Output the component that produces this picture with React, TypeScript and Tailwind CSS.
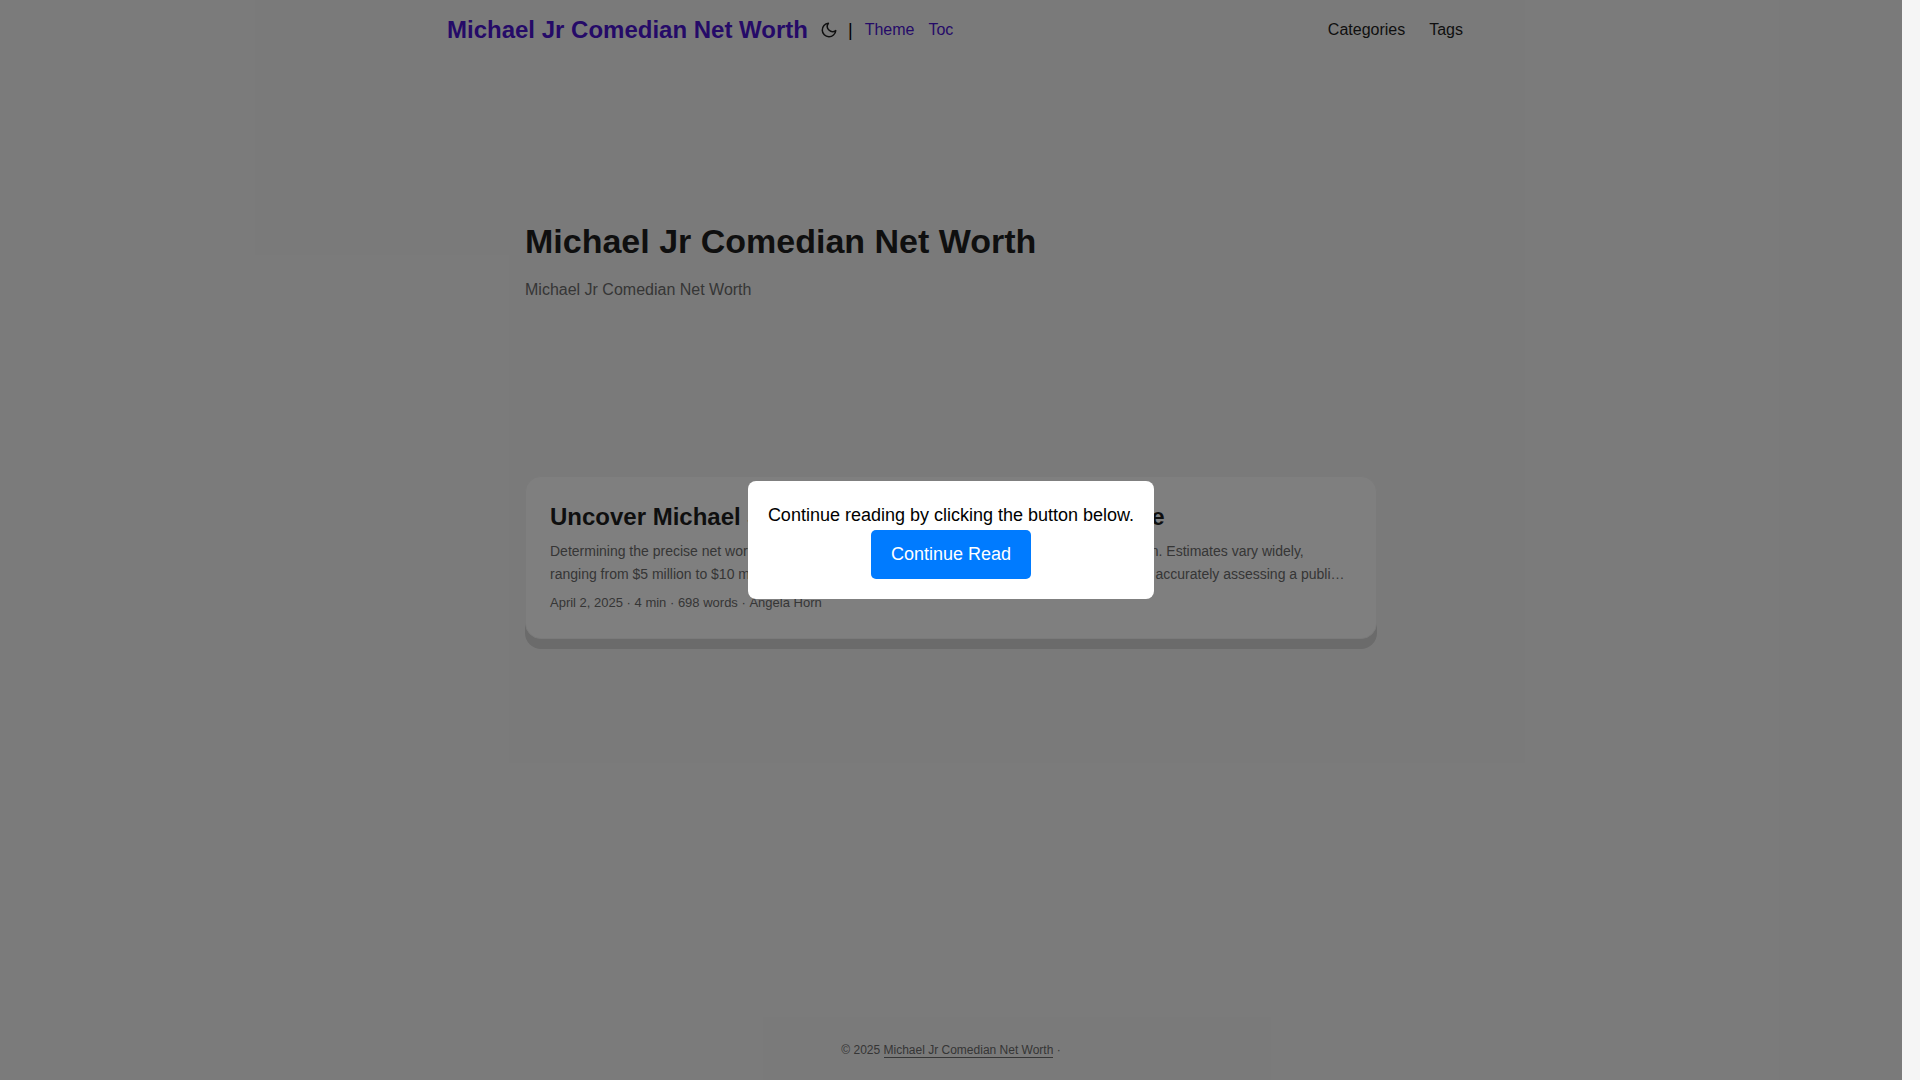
import React from "react";

const SITE = "Michael Jr Comedian Net Worth";

function MoonIcon() {
  return (
    <svg
      width="18"
      height="18"
      viewBox="0 0 24 24"
      fill="none"
      stroke="currentColor"
      strokeWidth="2"
      strokeLinecap="round"
      strokeLinejoin="round"
      aria-hidden="true"
    >
      <path d="M21 12.79A9 9 0 1 1 11.21 3 7 7 0 0 0 21 12.79z" />
    </svg>
  );
}

function Header() {
  return (
    <header className="mx-auto flex h-[60px] w-full max-w-[1072px] items-center justify-between pr-6 pl-8">
      <div className="flex items-center">
        <a href="#" className="text-2xl font-bold text-[#4a14d0]">
          {SITE}
        </a>
        <button type="button" aria-label="Toggle theme" className="ml-3 text-[#1e1e1e]">
          <MoonIcon />
        </button>
        <span className="ml-2.5 text-lg text-black">|</span>
        <nav className="ml-3 flex gap-3.5 text-base text-[#4a14d0]">
          <a href="#theme">Theme</a>
          <a href="#toc">Toc</a>
        </nav>
      </div>
      <nav>
        <ul className="flex gap-6 text-base text-[#1e1e1e]">
          <li>
            <a href="#categories">Categories</a>
          </li>
          <li>
            <a href="#tags">Tags</a>
          </li>
        </ul>
      </nav>
    </header>
  );
}

function Hero() {
  return (
    <section className="flex h-80 flex-col justify-center">
      <h1 className="text-[34px] leading-[44px] font-bold text-[#1e1e1e]">{SITE}</h1>
      <p className="my-3.5 text-base leading-[26px] text-[#6c6c6c]">{SITE}</p>
    </section>
  );
}

function PostCard() {
  return (
    <article className="mt-12 rounded-2xl border border-[#f5f5f5] bg-white p-6 shadow-[0_10px_0_#d6d6d6]">
      <h2 className="text-2xl leading-[31px] font-bold text-[#1e1e1e]">
        Uncover Michael Jr's Comedian Net Worth: The Guide
      </h2>
      <p className="mt-2 mb-1.5 line-clamp-2 pr-1 text-sm leading-[23px] text-[#6c6c6c]">
        Determining the precise net worth of comedian Michael Jr. generally requires careful consideration. Estimates
        vary widely, ranging from $5 million to $10 million, highlighting the inherent complexities and the challenges
        in accurately assessing a public figure's financial standing.
      </p>
      <footer className="text-[13px] leading-[22px] text-[#6c6c6c]">
        April 2, 2025&nbsp;·&nbsp;4 min&nbsp;·&nbsp;698 words&nbsp;·&nbsp;Angela Horn
      </footer>
    </article>
  );
}

function ContinueDialog() {
  return (
    <div className="absolute inset-0 flex items-center justify-center bg-black/50">
      <div
        role="dialog"
        aria-labelledby="continue-text"
        className="rounded-lg bg-white p-5 text-center text-lg leading-[29px] text-black"
      >
        <p id="continue-text">Continue reading by clicking the button below.</p>
        <button type="button" className="rounded-[5px] bg-[#007bff] px-5 py-2.5 text-white">
          Continue Read
        </button>
      </div>
    </div>
  );
}

export default function App() {
  return (
    <div className="flex min-h-screen bg-[#f5f5f5] font-['Liberation_Sans',Arial,sans-serif]">
      <div className="relative flex flex-1 flex-col">
        <Header />
        <main className="mx-auto w-full max-w-[900px] flex-1 p-6 pt-12">
          <Hero />
          <PostCard />
        </main>
        <footer className="flex h-[60px] items-center justify-center text-xs text-[#6c6c6c]">
          <span>
            © 2025{" "}
            <a href="#" className="border-b border-[#6c6c6c]">
              {SITE}
            </a>{" "}
            ·
          </span>
        </footer>
        <ContinueDialog />
      </div>
      <div className="w-[18px] bg-[#f5f5f5]" />
    </div>
  );
}
